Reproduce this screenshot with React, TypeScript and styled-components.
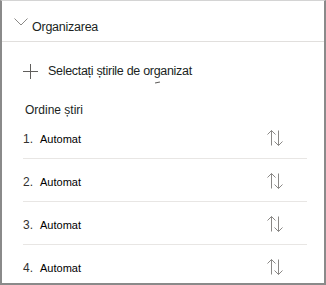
import React from "react";
import styled, { createGlobalStyle } from "styled-components";

const Global = createGlobalStyle`
  html, body { margin: 0; padding: 0; background: #ffffff; }
  body { font-family: "Liberation Sans", Arial, sans-serif; }
  * { box-sizing: border-box; }
`;

const Frame = styled.div`
  width: 326px;
  height: 285px;
  overflow: hidden;
  background: #ffffff;
  border-top: 1px solid #d4d4d4;
  border-left: 2px solid #8a8a8a;
  border-right: 2px solid #8a8a8a;
  border-bottom: 2px solid #8a8a8a;
  display: flex;
  flex-direction: column;
  & > * { flex: none; }
`;

const Header = styled.div`
  height: 41px;
  display: flex;
  align-items: flex-start;
  padding: 13px 0 0 11px;
  border-bottom: 1px solid #e1dfdd;
`;

const Chevron = styled.svg`
  flex: none;
  width: 16px;
  height: 12px;
`;

const HeaderTitle = styled.span`
  margin: 3px 0 0 3px;
  font-size: 12.5px;
  letter-spacing: -0.25px;
  line-height: 20px;
  color: #201f1e;
`;

const AddRow = styled.div`
  display: flex;
  align-items: center;
  height: 30px;
  margin: 14px 0 0 20px;
  gap: 9px;
  color: #201f1e;
  font-size: 12.5px;
  letter-spacing: -0.3px;
  line-height: 20px;
`;

const PlusIcon = styled.svg`
  flex: none;
  width: 17px;
  height: 17px;
`;

const AccessKey = styled.span`
  position: relative;
  &::after {
    content: "";
    position: absolute;
    left: 1px;
    bottom: -5px;
    width: 5px;
    height: 1px;
    background: #605e5c;
    transform: rotate(-12deg);
  }
`;

const SectionLabel = styled.div`
  margin: 18px 0 0 23px;
  height: 12px;
  font-size: 12px;
  line-height: 12px;
  color: #201f1e;
`;

const List = styled.div`
  display: flex;
  flex-direction: column;
  margin: 0 17px 0 21px;
`;

const Row = styled.div<{ $last?: boolean }>`
  flex: none;
  height: ${(p) => (p.$last ? "42px" : "43px")};
  display: flex;
  align-items: center;
  padding: 4px 23px 0 0;
  border-bottom: ${(p) => (p.$last ? "none" : "1px solid #e8e6e4")};
`;

const Num = styled.span`
  width: 17px;
  flex: none;
  font-size: 12px;
  color: #323130;
`;

const Value = styled.span`
  flex: 1;
  font-size: 11px;
  color: #000000;
`;

const SortIcon = styled.svg`
  flex: none;
  width: 18px;
  height: 18px;
  margin-top: -3px;
`;

const items = [1, 2, 3, 4];

export default function App() {
  return (
    <>
      <Global />
      <Frame>
        <Header>
          <Chevron viewBox="0 0 16 12">
            <path d="M1.5 4.5 L8 11 L14.5 4.5" fill="none" stroke="#8a8886" strokeWidth="1" />
          </Chevron>
          <HeaderTitle>Organizarea</HeaderTitle>
        </Header>
        <AddRow>
          <PlusIcon viewBox="0 0 17 17">
            <path d="M1 8.5 H16 M8.5 1 V16" fill="none" stroke="#605e5c" strokeWidth="1" />
          </PlusIcon>
          <span>
            Selectați știrile de or<AccessKey>g</AccessKey>anizat
          </span>
        </AddRow>
        <SectionLabel>Ordine știri</SectionLabel>
        <List>
          {items.map((n, i) => (
            <Row key={n} $last={i === items.length - 1}>
              <Num>{n}.</Num>
              <Value>Automat</Value>
              <SortIcon viewBox="0 0 18 18">
                <path
                  d="M5.5 1.5 V16.5 M1.5 5.5 L5.5 1.5 L9.5 5.5 M12.5 1.5 V16.5 M8.5 12.5 L12.5 16.5 L16.5 12.5"
                  fill="none"
                  stroke="#8a8886"
                  strokeWidth="1"
                />
              </SortIcon>
            </Row>
          ))}
        </List>
      </Frame>
    </>
  );
}
